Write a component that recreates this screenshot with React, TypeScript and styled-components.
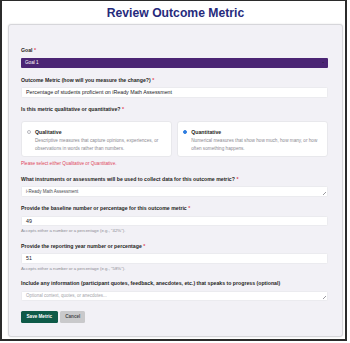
import React from "react";
import styled, { createGlobalStyle } from "styled-components";

const Global = createGlobalStyle`
  html, body { margin: 0; padding: 0; background: #ffffff; }
  body { font-family: "Liberation Sans", Arial, sans-serif; }
  * { box-sizing: border-box; }
`;

const Frame = styled.div`
  width: 347px;
  height: 341px;
  border: 2px solid #2b2b2b;
  border-top-width: 1px;
  background: #ffffff;
  display: flex;
  flex-direction: column;
  padding: 0 2px 0 6px;
`;

const Title = styled.h1`
  margin: 0;
  height: 23px;
  display: flex;
  align-items: center;
  justify-content: center;
  font-size: 12.2px;
  font-weight: 700;
  color: #262a7c;
`;

const Card = styled.div`
  flex: 1;
  margin-bottom: 2px;
  background: #f2f1f6;
  border: 1px solid #d6d6da;
  border-radius: 3px;
  box-shadow: 0 0 2px rgba(0, 0, 0, 0.12);
  padding: 22px 14px 13px 12px;
  display: flex;
  flex-direction: column;
  gap: 8.5px;
`;

const Group = styled.div`
  display: flex;
  flex-direction: column;
`;

const Label = styled.label<{ $space?: number }>`
  font-size: 5.2px;
  line-height: 6px;
  font-weight: 700;
  color: #1f1f23;
  margin-bottom: ${(p) => p.$space ?? 4.5}px;
  white-space: nowrap;
`;

const Req = styled.span`
  color: #e0475a;
  margin-left: 1.5px;
`;

const Select = styled.div`
  height: 10.5px;
  background: #4b2574;
  border-radius: 1px;
  display: flex;
  align-items: center;
  justify-content: space-between;
  padding: 0 4px;
  font-size: 4.6px;
  color: #ffffff;
`;

const Caret = styled.span`
  width: 2.5px;
  height: 1px;
  background: #3a2258;
`;

const Input = styled.div<{ $muted?: boolean; $placeholder?: boolean }>`
  height: 10.5px;
  background: #ffffff;
  border: 1px solid #ebebef;
  border-radius: 1.5px;
  display: flex;
  align-items: center;
  padding: 0 4px;
  font-size: ${(p) => (p.$placeholder || p.$muted ? 4.5 : 5.3)}px;
  color: ${(p) => (p.$placeholder ? "#a4a4aa" : p.$muted ? "#4a4a50" : "#222226")};
  white-space: nowrap;
  position: relative;
`;

const Grip = styled.span`
  position: absolute;
  right: 1px;
  bottom: 1px;
  width: 3px;
  height: 3px;
  background: linear-gradient(
    135deg,
    transparent 0 45%,
    #9a9aa0 45% 55%,
    transparent 55% 70%,
    #9a9aa0 70% 80%,
    transparent 80%
  );
`;

const Helper = styled.div`
  margin-top: 2px;
  font-size: 4.3px;
  line-height: 6px;
  color: #8a8a92;
`;

const RadioRow = styled.div`
  display: grid;
  grid-template-columns: 1fr 1fr;
  gap: 5.5px;
`;

const RadioCard = styled.div`
  height: 36px;
  background: #ffffff;
  border: 1px solid #e8e8ec;
  border-radius: 3px;
  padding: 7px 6px 4px 5px;
  display: grid;
  grid-template-columns: 4px 1fr;
  column-gap: 4px;
  align-content: start;
`;

const RadioDot = styled.span<{ $checked?: boolean }>`
  width: 4px;
  height: 4px;
  margin-top: 1px;
  border-radius: 50%;
  border: ${(p) => (p.$checked ? "1px solid #2f7de0" : "0.6px solid #b8b8be")};
  background: ${(p) => (p.$checked ? "#2f7de0" : "#ffffff")};
`;

const RadioTitle = styled.div`
  font-size: 5.2px;
  line-height: 6px;
  font-weight: 700;
  color: #1f1f23;
`;

const RadioDesc = styled.div`
  grid-column: 2;
  margin-top: 2px;
  font-size: 4.65px;
  line-height: 8.4px;
  color: #8a8a92;
  white-space: nowrap;
`;

const ErrorText = styled.div`
  margin-top: 4px;
  font-size: 4.6px;
  line-height: 6px;
  color: #e0475a;
`;

const Buttons = styled.div`
  display: flex;
  gap: 2.7px;
  margin-top: 1.5px;
`;

const Button = styled.button<{ $primary?: boolean }>`
  height: 11.6px;
  padding: 0;
  width: ${(p) => (p.$primary ? 36.6 : 25)}px;
  border: none;
  border-radius: 1.5px;
  font-family: inherit;
  font-size: 4.6px;
  font-weight: 700;
  color: ${(p) => (p.$primary ? "#ffffff" : "#4a4a4e")};
  background: ${(p) => (p.$primary ? "#0e5a48" : "#c9c9cb")};
`;

export default function App() {
  return (
    <>
      <Global />
      <Frame>
        <Title>Review Outcome Metric</Title>
        <Card>
          <Group>
            <Label>
              Goal<Req>*</Req>
            </Label>
            <Select>
              <span>Goal 1</span>
              <Caret />
            </Select>
          </Group>
          <Group>
            <Label>
              Outcome Metric (how will you measure the change?)<Req>*</Req>
            </Label>
            <Input>Percentage of students proficient on iReady Math Assessment</Input>
          </Group>
          <Group>
            <Label $space={9}>
              Is this metric qualitative or quantitative?<Req>*</Req>
            </Label>
            <RadioRow>
              <RadioCard>
                <RadioDot />
                <RadioTitle>Qualitative</RadioTitle>
                <RadioDesc>
                  Descriptive measures that capture opinions, experiences, or
                  <br />
                  observations in words rather than numbers.
                </RadioDesc>
              </RadioCard>
              <RadioCard>
                <RadioDot $checked />
                <RadioTitle>Quantitative</RadioTitle>
                <RadioDesc>
                  Numerical measures that show how much, how many, or how
                  <br />
                  often something happens.
                </RadioDesc>
              </RadioCard>
            </RadioRow>
            <ErrorText>Please select either Qualitative or Quantitative.</ErrorText>
          </Group>
          <Group>
            <Label>
              What instruments or assessments will be used to collect data for this outcome metric?
              <Req>*</Req>
            </Label>
            <Input $muted>
              i-Ready Math Assessment
              <Grip />
            </Input>
          </Group>
          <Group>
            <Label>
              Provide the baseline number or percentage for this outcome metric<Req>*</Req>
            </Label>
            <Input>49</Input>
            <Helper>Accepts either a number or a percentage (e.g., "42%").</Helper>
          </Group>
          <Group>
            <Label>
              Provide the reporting year number or percentage<Req>*</Req>
            </Label>
            <Input>51</Input>
            <Helper>Accepts either a number or a percentage (e.g., "58%").</Helper>
          </Group>
          <Group>
            <Label>
              Include any information (participant quotes, feedback, anecdotes, etc.) that speaks to
              progress (optional)
            </Label>
            <Input $placeholder>
              Optional context, quotes, or anecdotes...
              <Grip />
            </Input>
          </Group>
          <Buttons>
            <Button $primary>Save Metric</Button>
            <Button>Cancel</Button>
          </Buttons>
        </Card>
      </Frame>
    </>
  );
}
